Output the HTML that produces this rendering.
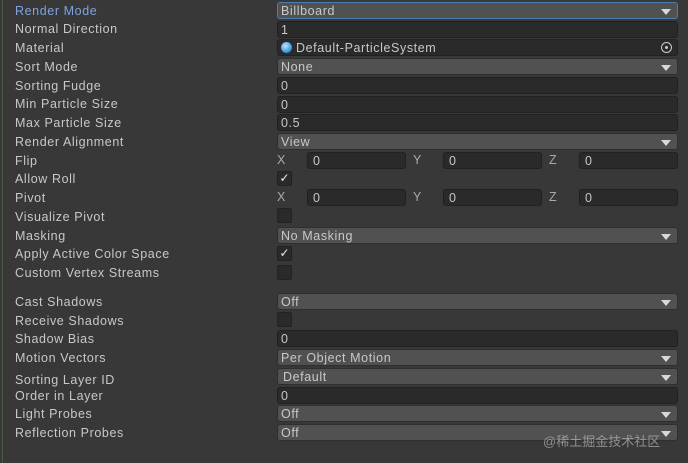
<!DOCTYPE html><html><head><style>
body{margin:0;width:688px;height:463px;background:#383838;overflow:hidden;position:relative;font-family:"Liberation Sans",sans-serif;font-size:12.5px;letter-spacing:0.6px;color:#c8c8c8}
.l{position:absolute;left:15px;height:18px;line-height:20px;white-space:nowrap}
.f{position:absolute;left:277px;width:401px;height:17px;line-height:17px;box-sizing:border-box;border-radius:3px;background:#2a2a2a;border:1px solid #212121;padding-left:3px;white-space:nowrap}
.d{background:#515151;border-color:#2f2f2f}
.d:after{content:"";position:absolute;right:6px;top:6px;border-left:5px solid transparent;border-right:5px solid transparent;border-top:6px solid #d8d8d8}
.c{position:absolute;left:277px;width:15px;height:15px;box-sizing:border-box;border-radius:2px;background:#2a2a2a;border:1px solid #222;font-size:12px;line-height:13px;text-align:center;color:#eee;letter-spacing:0}
.x{position:absolute;height:18px;line-height:18px;color:#aaa}
</style></head><body>
<div style="position:absolute;left:2px;top:0;width:1px;height:463px;background:#4a5a3a"></div>
<div class="l" style="top:1px;color:#7fa3e0">Render Mode</div>
<div class="f d" style="top:2px;border-color:#4d7cb0">Billboard</div>
<div class="l" style="top:19px">Normal Direction</div><div class="f" style="top:21px">1</div>
<div class="l" style="top:38px">Material</div>
<div class="f" style="top:39px;padding-left:18px">Default-ParticleSystem
<span style="position:absolute;left:3px;top:2px;width:11px;height:11px;border-radius:50%;background:radial-gradient(circle at 40% 35%,#cdf,#3aa0e0 60%,#1a5a90)"></span>
<span style="position:absolute;right:5px;top:2px;width:9px;height:9px;border-radius:50%;border:1.5px solid #ccc"><span style="position:absolute;left:3px;top:3px;width:3px;height:3px;border-radius:50%;background:#ccc"></span></span></div>
<div class="l" style="top:57px">Sort Mode</div><div class="f d" style="top:58px">None</div>
<div class="l" style="top:76px">Sorting Fudge</div><div class="f" style="top:77px">0</div>
<div class="l" style="top:94px">Min Particle Size</div><div class="f" style="top:96px">0</div>
<div class="l" style="top:113px">Max Particle Size</div><div class="f" style="top:114px">0.5</div>
<div class="l" style="top:132px">Render Alignment</div><div class="f d" style="top:133px">View</div>
<div class="l" style="top:151px">Flip</div>
<div class="x" style="left:277px;top:151px">X</div><div class="f" style="left:307px;width:99px;top:152px;padding-left:5px">0</div>
<div class="x" style="left:413px;top:151px">Y</div><div class="f" style="left:443px;width:99px;top:152px;padding-left:5px">0</div>
<div class="x" style="left:549px;top:151px">Z</div><div class="f" style="left:579px;width:99px;top:152px;padding-left:5px">0</div>
<div class="l" style="top:169px">Allow Roll</div><div class="c" style="top:171px">✓</div>
<div class="l" style="top:188px">Pivot</div>
<div class="x" style="left:277px;top:188px">X</div><div class="f" style="left:307px;width:99px;top:189px;padding-left:5px">0</div>
<div class="x" style="left:413px;top:188px">Y</div><div class="f" style="left:443px;width:99px;top:189px;padding-left:5px">0</div>
<div class="x" style="left:549px;top:188px">Z</div><div class="f" style="left:579px;width:99px;top:189px;padding-left:5px">0</div>
<div class="l" style="top:207px">Visualize Pivot</div><div class="c" style="top:208px"></div>
<div class="l" style="top:226px">Masking</div><div class="f d" style="top:227px">No Masking</div>
<div class="l" style="top:244px">Apply Active Color Space</div><div class="c" style="top:246px">✓</div>
<div class="l" style="top:263px">Custom Vertex Streams</div><div class="c" style="top:265px"></div>
<div class="l" style="top:292px">Cast Shadows</div><div class="f d" style="top:293px">Off</div>
<div class="l" style="top:311px">Receive Shadows</div><div class="c" style="top:312px"></div>
<div class="l" style="top:329px">Shadow Bias</div><div class="f" style="top:330px">0</div>
<div class="l" style="top:348px">Motion Vectors</div><div class="f d" style="top:349px">Per Object Motion</div>
<div class="l" style="top:370px">Sorting Layer ID</div><div class="f d" style="top:368px;padding-left:5px">Default</div>
<div class="l" style="top:386px">Order in Layer</div><div class="f" style="top:387px">0</div>
<div class="l" style="top:404px">Light Probes</div><div class="f d" style="top:405px">Off</div>
<div class="l" style="top:423px">Reflection Probes</div><div class="f d" style="top:424px">Off</div>
<div style="position:absolute;left:543px;top:431px;letter-spacing:0;font-family:'Liberation Sans','Noto Sans CJK SC',sans-serif;font-size:13px;color:rgba(200,200,200,0.6)">@稀土掘金技术社区</div>
</body></html>
